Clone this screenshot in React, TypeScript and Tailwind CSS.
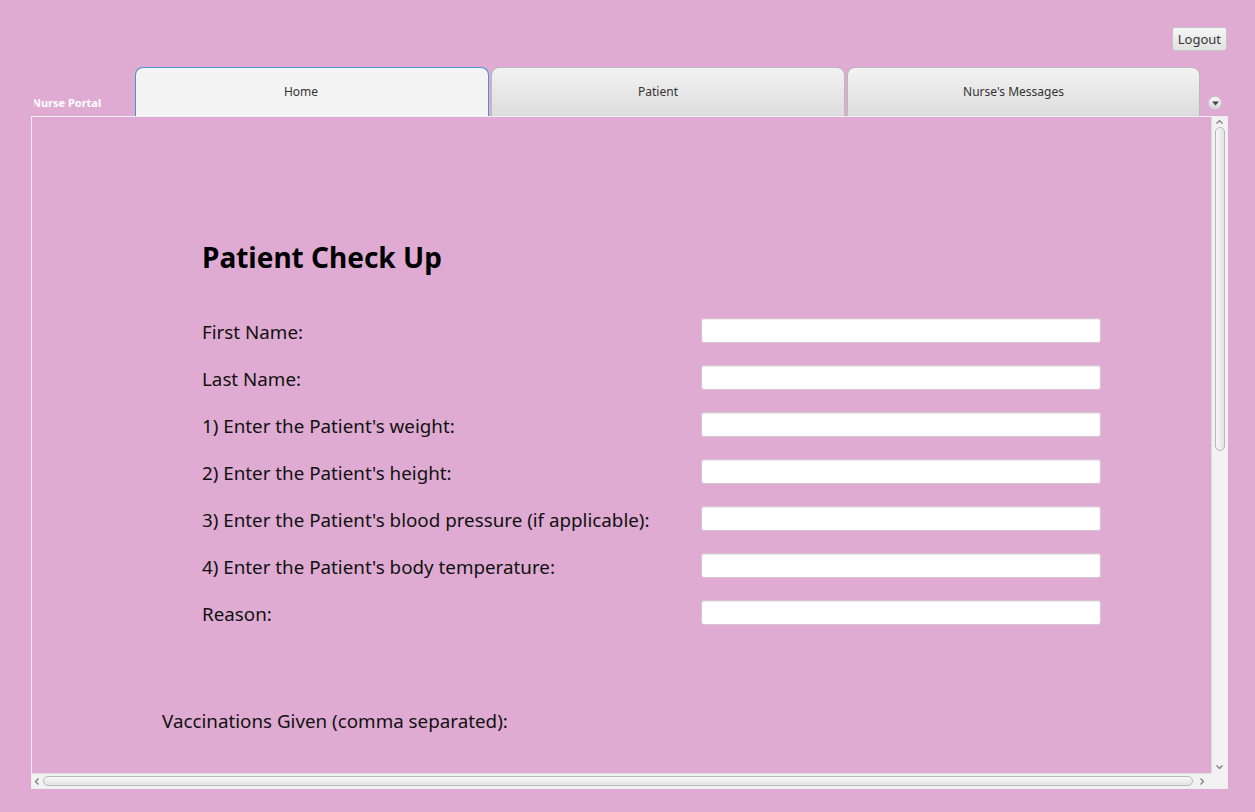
import React from "react";

const rows = [
  "First Name:",
  "Last Name:",
  "1) Enter the Patient's weight:",
  "2) Enter the Patient's height:",
  "3) Enter the Patient's blood pressure (if applicable):",
  "4) Enter the Patient's body temperature:",
  "Reason:",
];

const tabs = [
  { label: "Home", active: true, w: "w-[354px]" },
  { label: "Patient", active: false, w: "w-[354px]" },
  { label: "Nurse's Messages", active: false, w: "w-[353px]" },
];

function Chevron({ dir }: { dir: "up" | "down" | "left" | "right" }) {
  const d = {
    up: "M1.5 5.5 L4.5 2.5 L7.5 5.5",
    down: "M1.5 2.5 L4.5 5.5 L7.5 2.5",
    left: "M5.5 1.5 L2.5 4.5 L5.5 7.5",
    right: "M2.5 1.5 L5.5 4.5 L2.5 7.5",
  }[dir];
  return (
    <svg width="9" height="9" viewBox="0 0 9 9">
      <path d={d} fill="none" stroke="#7a7a7a" strokeWidth="1.2" />
    </svg>
  );
}

export default function App() {
  return (
    <div
      className="w-full h-screen bg-[#dfabd2] flex flex-col overflow-hidden"
      style={{ fontFamily: '"Noto Sans", "Open Sans", sans-serif' }}
    >
      {/* Top bar */}
      <div className="flex justify-end pt-[27px] pr-[28px] h-[67px]">
        <button className="h-[24px] px-[5px] text-[13px] leading-none text-[#333] bg-gradient-to-b from-[#f6f6f6] to-[#e2e2e2] border border-[#c4c4c4] rounded-[3px]">
          Logout
        </button>
      </div>

      {/* Tab row */}
      <div className="flex h-[49px]">
        <div className="w-[34px]" />
        <div className="w-[101px] overflow-hidden flex items-end pb-[8px]">
          <span className="-ml-[2px] text-[11px] font-bold text-white whitespace-nowrap leading-none">
            Nurse Portal
          </span>
        </div>
        <div className="flex gap-[2px]">
          {tabs.map((t) => (
            <div
              key={t.label}
              className={
                t.active
                  ? `${t.w} h-[49px] pr-[22px] rounded-t-[8px] border border-b-0 border-[#4a95cf] bg-[#f4f4f4] flex items-center justify-center text-[12px] text-[#333]`
                  : `${t.w} h-[49px] pr-[20px] rounded-t-[8px] border border-b-0 border-[#b9b9b9] bg-gradient-to-b from-[#f3f3f3] to-[#dcdcdc] flex items-center justify-center text-[12px] text-[#333]`
              }
            >
              {t.label}
            </div>
          ))}
        </div>
        <div className="flex items-end pb-[6px] pl-[8px]">
          <div className="w-[14px] h-[14px] rounded-full bg-gradient-to-b from-[#f8f8f8] to-[#d8d8d8] border border-[#c8c8c8] flex items-center justify-center">
            <svg width="7" height="5" viewBox="0 0 7 5">
              <path d="M0 0.5 L7 0.5 L3.5 4.5 Z" fill="#444" />
            </svg>
          </div>
        </div>
      </div>

      {/* Content panel */}
      <div className="ml-[31px] w-[1197px] h-[673px] border border-[#efefef] grid grid-cols-[1fr_16px] grid-rows-[1fr_15px]">
        <div className="overflow-hidden pt-[122px]">
          <div className="pl-[170px]">
            <h1 className="text-[28px] font-bold leading-[36px] text-black">Patient Check Up</h1>
            <div className="mt-[32px] flex flex-col">
              {rows.map((r) => (
                <div key={r} className="h-[47px] flex items-center">
                  <span className="w-[499px] pt-[4px] text-[18.8px] text-[#111]">{r}</span>
                  <div className="w-[400px] h-[25px] bg-white rounded-[3px] border border-[#d9c5d2] shadow-[inset_0_1px_1px_rgba(0,0,0,0.08)]" />
                </div>
              ))}
            </div>
          </div>
          <div className="pl-[130px] mt-[71px] text-[18.8px] leading-[28px] text-[#111]">
            Vaccinations Given (comma separated):
          </div>
        </div>

        {/* vertical scrollbar */}
        <div className="bg-[#f2f2f2] border-l border-[#dcdcdc] flex flex-col items-center">
          <div className="h-[10px] flex items-center">
            <Chevron dir="up" />
          </div>
          <div className="w-[10px] h-[324px] rounded-[5px] border border-[#b8b8b8] bg-gradient-to-r from-[#f7f7f7] to-[#e4e4e4]" />
          <div className="flex-1" />
          <div className="h-[12px] flex items-center">
            <Chevron dir="down" />
          </div>
        </div>

        {/* horizontal scrollbar */}
        <div className="bg-[#f2f2f2] border-t border-[#dcdcdc] flex items-center">
          <div className="w-[11px] flex justify-center">
            <Chevron dir="left" />
          </div>
          <div className="flex-1 h-[10px] rounded-[5px] border border-[#b8b8b8] bg-gradient-to-b from-[#f7f7f7] to-[#e4e4e4]" />
          <div className="w-[18px] flex justify-center">
            <Chevron dir="right" />
          </div>
        </div>
        <div className="bg-[#f2f2f2]" />
      </div>
    </div>
  );
}
